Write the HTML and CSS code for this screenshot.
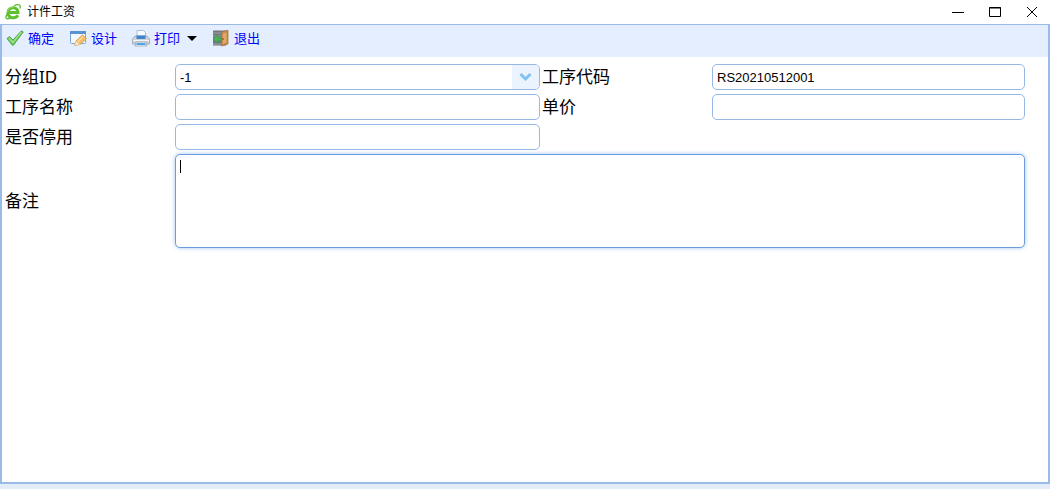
FILE: index.html
```html
<!DOCTYPE html>
<html lang="zh-CN">
<head>
    <meta charset="UTF-8">
    <title>计件工资</title>
    <link rel="stylesheet" href="styles.css">
</head>
<body>
<header class="titlebar">
    <svg class="logo" viewBox="0 0 16 16" aria-hidden="true">
        <path d="M3 8.500H13C13 1.800 3.200 2.200 3 8.700C3 14.600 10.500 15.200 13 11.300" fill="none" stroke="#5fc132" stroke-width="3"/>
        <path d="M2.500 9.500C-.5 14 1 16 6 14M9 2C13 -.3 16.500 .5 14.800 4.500" fill="none" stroke="#57b82f" stroke-width="1.300"/>
        <path d="M2.600 7.500C3.500 4 6 3 8 3" fill="none" stroke="#a5e57b"/>
    </svg>
    <h1>计件工资</h1>
    <div class="win-btns">
        <button type="button" aria-label="最小化"><svg viewBox="0 0 12 12"><path d="M0 6.500H12"/></svg></button>
        <button type="button" aria-label="最大化"><svg viewBox="0 0 12 12"><path d="M.5 1.500H11.500V10.500H.5ZM0 2H12"/></svg></button>
        <button type="button" aria-label="关闭"><svg viewBox="0 0 12 12"><path d="M1 1L11 11M11 1L1 11"/></svg></button>
    </div>
</header>

<main class="panel">
    <nav class="toolbar">
        <a href="#ok">
            <svg viewBox="0 0 18 18">
                <path d="M1 9.500L3.500 7.500L7 11L15.500 1.800L17.300 3L7.500 16.200H6.200Z" fill="#72cb5d" stroke="#479f48" stroke-width=".9"/>
                <path d="M3 9.300L6.900 13.300L15.500 3.200" fill="none" stroke="#a2e48e" stroke-width="1.200"/>
            </svg>确定</a>
        <a href="#design">
            <svg viewBox="0 0 18 18">
                <rect x="1.500" y="2.500" width="15" height="12" rx="1" fill="#f4f8fd" stroke="#7ba6d4"/>
                <path d="M1 2H17V5H1Z" fill="#5793d3"/>
                <path d="M5.500 16.500L7 12L13.500 6L17.500 9.500L11 15.500Z" fill="#f5bd65" stroke="#cf9751" stroke-width=".8"/>
                <path d="M5.500 16.500L7 12L11 15.500Z" fill="#f8e2bc"/>
                <path d="M9 12.500L14 7.700" stroke="#ffe49b" stroke-width="1.200"/>
            </svg>设计</a>
        <a href="#print">
            <svg viewBox="0 0 18 18">
                <path d="M5 8V1.500H11.500L13.500 3.500V8Z" fill="#f8fbff" stroke="#a9bdd4"/>
                <path d="M3 7H15L17.500 10V15H.5V10Z" fill="#ced3da" stroke="#9299a3" stroke-width=".7"/>
                <path d="M4.500 6.500H13.500V10H4.500Z" fill="#3f86cc"/>
                <path d="M1 11.500H17" stroke="#f5f6f7"/>
                <path d="M4 13H14L15 17H3Z" fill="#f4f8fc" stroke="#879aaf" stroke-width=".7"/>
                <path d="M4.500 15H13.500" stroke="#4aa4e8" stroke-width="2"/>
            </svg>打印<span class="caret"></span></a>
        <a href="#exit">
            <svg viewBox="0 0 18 18">
                <rect x="1" y="1.500" width="13" height="15" fill="#70787c"/>
                <path d="M1 4H10M1 7H10M1 15H10" stroke="#9ba3a8"/>
                <path d="M1 10L5 6V8H9V12H5V14Z" fill="#4fae5c" stroke="#398f4b" stroke-width=".6"/>
                <path d="M9.500 3L16 1.200V15L9.500 17Z" fill="#c98a4c" stroke="#a87542" stroke-width=".8"/>
                <path d="M11 4.500L14.500 3.500V13.500L11 14.700Z" fill="#dfaa69"/>
                <circle cx="11" cy="10" r=".8" fill="#684019"/>
            </svg>退出</a>
    </nav>

    <form class="form">
        <label for="groupId">分组ID</label>
        <div class="combo">
            <select id="groupId"><option>-1</option></select>
            <svg viewBox="0 0 27 24" aria-hidden="true"><path d="M8.500 9L13.500 14L18.500 9"/></svg>
        </div>
        <label for="code">工序代码</label>
        <input type="text" id="code" value="RS20210512001">

        <label for="name">工序名称</label>
        <input type="text" id="name">
        <label for="price">单价</label>
        <input type="text" id="price">

        <label for="disabled">是否停用</label>
        <input type="text" id="disabled">

        <label for="remark" class="remark-label">备注</label>
        <textarea id="remark" class="remark" autofocus></textarea>
    </form>
</main>
<footer class="status"></footer>
</body>
</html>
```
FILE: styles.css
```css
* {
    box-sizing: border-box;
}

body {
    display: flex;
    flex-direction: column;
    min-height: 100vh;
    margin: 0;
    padding-bottom: 5px;
    background: #fff;
    color: #000;
    font-family: "Noto Sans", "Noto Sans CJK SC", sans-serif;
}

.titlebar {
    display: flex;
    align-items: center;
    height: 24px;
    padding-left: 5px;
}

.logo {
    width: 16px;
    height: 16px;
    margin-right: 6px;
}

.titlebar h1 {
    margin: 0;
    font-size: 12px;
    font-weight: normal;
    line-height: 24px;
}

.win-btns {
    display: flex;
    margin-left: auto;
}

.win-btns button {
    display: flex;
    align-items: center;
    justify-content: center;
    width: 37px;
    height: 24px;
    padding: 0;
    border: 0;
    background: none;
}

.win-btns svg {
    width: 12px;
    height: 12px;
    fill: none;
    stroke: #000;
}

.panel {
    flex: 1;
    border: 2px solid #99bbe8;
    border-top-width: 1px;
}

.toolbar {
    display: flex;
    align-items: flex-start;
    gap: 15px;
    height: 32px;
    padding: 3px 4px;
    background: #e5eeff;
}

.toolbar a {
    display: flex;
    align-items: center;
    color: #00f;
    font-size: 13px;
    line-height: 20px;
    text-decoration: none;
}

.toolbar svg {
    width: 18px;
    height: 18px;
    margin-right: 4px;
}

.caret {
    margin-left: 7px;
    border: 5px solid transparent;
    border-top-color: #000;
    border-bottom-width: 0;
}

.form {
    display: grid;
    grid-template-columns: 168px 365fr 168px 313fr;
    grid-auto-rows: minmax(26px, auto);
    align-items: center;
    gap: 4px 2px;
    padding: 7px 23px 7px 3px;
}

.form label {
    font-size: 17px;
    line-height: 26px;
}

.form input,
.form select,
.form textarea {
    display: block;
    width: 100%;
    height: 26px;
    margin: 0;
    padding: 0 4px;
    border: 1px solid #95b8e7;
    border-radius: 5px;
    outline: none;
    background: #fff;
    color: #000;
    font-family: "Liberation Sans", "Noto Sans CJK SC", sans-serif;
    font-size: 13px;
}

.combo {
    position: relative;
}

.form select {
    appearance: none;
}

/* arrow lies over the right end of the select */
.combo svg {
    position: absolute;
    top: 1px;
    right: 1px;
    width: 27px;
    height: 24px;
    border-radius: 0 4px 4px 0;
    background: #ebf3ff;
    fill: none;
    stroke: #7fc3f0;
    stroke-width: 3;
    pointer-events: none;
}

.remark-label {
    grid-column: 1;
}

.form .remark {
    grid-column: 2 / -1;
    height: 94px;
    padding: 4px;
    resize: none;
}

/* steady text cursor at the start of the empty box */
.form .remark:focus {
    border-color: #6b9cde;
    box-shadow: 0 0 4px #a5c5f0;
    background: linear-gradient(#000, #000) 4px 5px / 1px 13px no-repeat #fff;
    caret-color: transparent;
}

.status {
    height: 5px;
    background: #e3edf7;
}
```
